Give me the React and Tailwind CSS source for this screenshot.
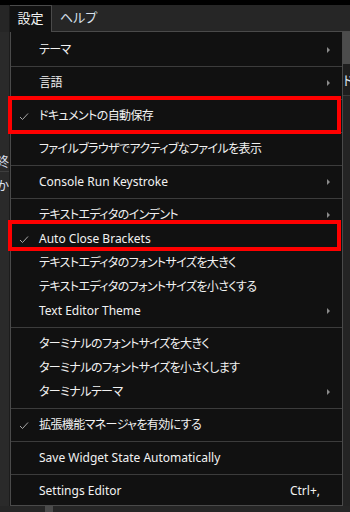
const items = [
  { label: "テーマ", arrow: true, jp: true },
  { sep: true },
  { label: "言語", arrow: true, jp: true },
  { sep: true },
  { label: "ドキュメントの自動保存", check: true, jp: true },
  { sep: true },
  { label: "ファイルブラウザでアクティブなファイルを表示", jp: true },
  { sep: true },
  { label: "Console Run Keystroke", arrow: true },
  { sep: true },
  { label: "テキストエディタのインデント", arrow: true, jp: true },
  { label: "Auto Close Brackets", check: true },
  { label: "テキストエディタのフォントサイズを大きく", jp: true },
  { label: "テキストエディタのフォントサイズを小さくする", jp: true },
  { label: "Text Editor Theme", arrow: true },
  { sep: true },
  { label: "ターミナルのフォントサイズを大きく", jp: true },
  { label: "ターミナルのフォントサイズを小さくします", jp: true },
  { label: "ターミナルテーマ", arrow: true, jp: true },
  { sep: true },
  { label: "拡張機能マネージャを有効にする", check: true, jp: true },
  { sep: true },
  { label: "Save Widget State Automatically" },
  { sep: true },
  { label: "Settings Editor", shortcut: "Ctrl+," },
];

function Check() {
  return (
    <svg width="10" height="10" viewBox="0 0 10 10" className="absolute left-[8px] top-[8px]">
      <polyline points="1,5 3.5,7.5 9,1.5" fill="none" stroke="#a8a8a8" strokeWidth="1" />
    </svg>
  );
}

function MenuItem({ label, check, arrow, shortcut, jp }) {
  return (
    <div className="relative flex h-[24px] items-center pl-[28px] pr-[22px] text-[#f2f2f2]">
      {check ? <Check /> : null}
      <span className={jp ? "flex-1 whitespace-nowrap tracking-[-0.6px]" : "flex-1 whitespace-nowrap"}>
        {label}
      </span>
      {shortcut ? <span className="whitespace-nowrap">{shortcut}</span> : null}
      {arrow ? (
        <span className="absolute right-[12px] top-[9px] h-0 w-0 border-y-[3px] border-l-[3px] border-y-transparent border-l-[#8a8a8a]" />
      ) : null}
    </div>
  );
}

export default function App() {
  return (
    <div className="relative h-[512px] w-[350px] overflow-hidden bg-[#262626] font-['Noto_Sans','Noto_Sans_CJK_JP',sans-serif] text-[12px] [font-feature-settings:'palt']">
      <div className="h-[5px] bg-black" />
      {/* menubar */}
      <div className="flex h-[27px] items-stretch">
        <div className="w-[10px] shrink-0 border-r border-[#1a1a1a] bg-[#262626]" />
        <div className="flex w-[42px] shrink-0 items-center justify-center border-r border-t border-[#4a4a4a] bg-[#111111] text-[13px] text-[#f4f4f4]">
          設定
        </div>
        <div className="flex min-w-0 flex-1 items-center border-b border-[#4a4a4a] pl-[8px] text-[13px] text-[#d8e0ec]">
          ヘルプ
        </div>
      </div>
      <div className="flex">
        {/* left strip */}
        <div className="flex w-[10px] shrink-0 flex-col border-r border-[#1c1c1c] bg-[#2a2a2a]">
          <div className="h-[118px]" />
          <div className="flex h-[22px] justify-end overflow-hidden whitespace-nowrap border-b border-[#3e3e3e] text-[13px] leading-[22px] text-[#d6deea]">
            最終
          </div>
          <div className="flex h-[26px] justify-end overflow-hidden whitespace-nowrap text-[13px] leading-[26px] text-[#d6deea]">
            しか
          </div>
        </div>
        {/* menu */}
        <div className="flex w-[333px] shrink-0 flex-col border border-t-0 border-[#4a4a4a] bg-[#111111] pb-[2px] pt-[6px]">
          {items.map((it, i) =>
            it.sep ? (
              <div key={i} className="my-[4px] h-px bg-[#3c3c3c]" />
            ) : (
              <MenuItem key={i} {...it} />
            )
          )}
        </div>
        {/* right strip */}
        <div className="flex min-w-0 flex-1 flex-col">
          <div className="h-[32px] bg-[#4c4c4c]" />
          <div className="h-[32px] overflow-hidden whitespace-nowrap border-b border-[#3a3a3a] bg-[#1e1e1e] text-[13px] leading-[32px] text-[#dfe6f0]">
            ドキュ
          </div>
          <div className="flex-1 bg-[#242424]" />
        </div>
      </div>
      {/* bottom strip */}
      <div className="flex h-[6px] bg-[#262626]">
        <div className="ml-[45px] w-[8px] bg-[#4a4a4a]" />
      </div>
      {/* highlight boxes */}
      <div className="absolute left-[8px] top-[96px] h-[38px] w-[333px] border-4 border-[#ff0000]" />
      <div className="absolute left-[8px] top-[220px] h-[31px] w-[333px] border-4 border-[#ff0000]" />
    </div>
  );
}
